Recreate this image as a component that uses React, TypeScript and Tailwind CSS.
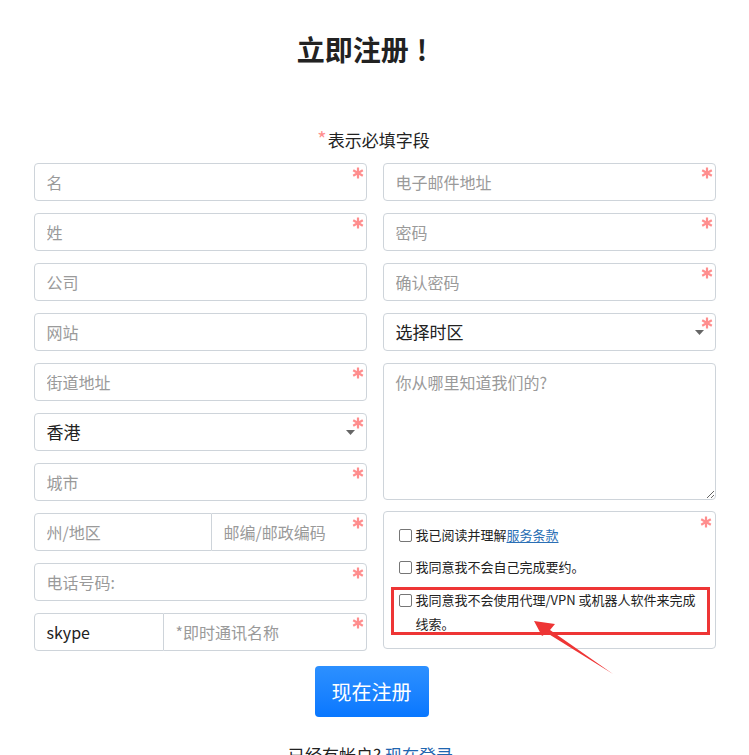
import React from "react";

const FONT = { fontFamily: '"Noto Sans CJK SC", "Noto Sans", sans-serif' };

function Star() {
  return (
    <svg
      className="absolute right-[3px] top-[4px] pointer-events-none"
      width="12"
      height="12"
      viewBox="0 0 12 12"
    >
      <g stroke="#ff8e8e" strokeWidth="2.2" strokeLinecap="butt">
        <line x1="6" y1="0.5" x2="6" y2="11.5" />
        <line x1="1.2" y1="3.2" x2="10.8" y2="8.8" />
        <line x1="1.2" y1="8.8" x2="10.8" y2="3.2" />
      </g>
    </svg>
  );
}

function Caret() {
  return (
    <svg
      className="absolute right-[12px] top-[17px] pointer-events-none"
      width="9"
      height="5"
      viewBox="0 0 9 5"
    >
      <polygon points="0,0 9,0 4.5,5" fill="#666" />
    </svg>
  );
}

const inputCls =
  "w-full h-[38px] rounded-[4px] border border-[#ced4da] bg-white px-3 text-[16px] text-[#333] placeholder:text-[#9a9a9a] outline-none";

function Field({ ph, star = true }: { ph: string; star?: boolean }) {
  return (
    <div className="relative">
      <input className={inputCls} placeholder={ph} style={FONT} />
      {star && <Star />}
    </div>
  );
}

function SelectField({ value }: { value: string }) {
  return (
    <div className="relative">
      <div
        className="w-full h-[38px] rounded-[4px] border border-[#ced4da] bg-white px-3 text-[17px] text-[#222] flex items-center"
        style={FONT}
      >
        {value}
      </div>
      <Caret />
      <Star />
    </div>
  );
}

function Check({ children }: { children: React.ReactNode }) {
  return (
    <label className="flex items-start gap-[4px] text-[13px] leading-6 text-[#222]" style={FONT}>
      <span className="mt-[6px] ml-[15px] w-[13px] h-[13px] shrink-0 rounded-[2px] border border-[#767676] bg-white" />
      <span>{children}</span>
    </label>
  );
}

export default function App() {
  return (
    <div className="w-full min-h-[755px] bg-white" style={FONT}>
      <div className="w-[682px] mx-auto flex flex-col items-center pt-[31px]">
        <h1 className="mr-[25px] text-[28px] leading-[36px] font-bold text-[#222]">
          立即注册<span className="ml-[8px]">!</span>
        </h1>
        <p className="mt-[61px] mr-[2px] text-[17px] leading-6 text-[#222]">
          <span className="text-[#ff8e8e] text-[20px] leading-none mr-[1px]">*</span>表示必填字段
        </p>

        <div className="mt-[11px] w-full grid grid-cols-2 gap-x-[16px]">
          <div className="flex flex-col gap-[12px]">
            <Field ph="名" />
            <Field ph="姓" />
            <Field ph="公司" star={false} />
            <Field ph="网站" star={false} />
            <Field ph="街道地址" />
            <SelectField value="香港" />
            <Field ph="城市" />
            <div className="relative flex h-[38px]">
              <input
                className="w-[178px] h-full rounded-l-[4px] border border-[#ced4da] px-3 text-[16px] placeholder:text-[#9a9a9a] outline-none"
                placeholder="州/地区"
                style={FONT}
              />
              <input
                className="flex-1 min-w-0 h-full rounded-r-[4px] border border-l-0 border-[#ced4da] px-3 text-[16px] placeholder:text-[#9a9a9a] outline-none"
                placeholder="邮编/邮政编码"
                style={FONT}
              />
              <Star />
            </div>
            <Field ph="电话号码:" />
            <div className="relative flex h-[38px]">
              <div className="w-[130px] h-full rounded-l-[4px] border border-[#ced4da] px-3 flex items-center text-[16px] text-[#222]">
                skype
              </div>
              <input
                className="flex-1 min-w-0 h-full rounded-r-[4px] border border-l-0 border-[#ced4da] px-3 text-[16px] placeholder:text-[#9a9a9a] outline-none"
                placeholder="*即时通讯名称"
                style={FONT}
              />
              <Star />
            </div>
          </div>

          <div className="flex flex-col gap-[12px]">
            <Field ph="电子邮件地址" />
            <Field ph="密码" />
            <Field ph="确认密码" />
            <SelectField value="选择时区" />
            <textarea
              className="w-full h-[137px] rounded-[4px] border border-[#ced4da] px-3 py-[6px] text-[16px] leading-6 placeholder:text-[#9a9a9a] outline-none resize-y"
              placeholder="你从哪里知道我们的?"
              style={FONT}
            />
            <div className="relative -mt-[1px] h-[138px] rounded-[4px] border border-[#ced4da] bg-white pt-[11px] flex flex-col gap-[8px]">
              <Star />
              <Check>
                我已阅读并理解
                <a className="text-[#2a6fb5] underline underline-offset-2">服务条款</a>
              </Check>
              <Check>我同意我不会自己完成要约。</Check>
              <div className="mt-[1px]">
                <Check>
                  我同意我不会使用代理/VPN 或机器人软件来完成
                  <br />
                  线索。
                </Check>
              </div>
              <div className="absolute left-[7px] top-[75px] w-[319px] h-[48px] border-[3px] border-[#ee3535] pointer-events-none" />
              <svg
                className="absolute left-[140px] top-[99px] pointer-events-none overflow-visible"
                width="100"
                height="70"
                viewBox="0 0 100 70"
              >
                <polygon
                  points="10,10 31,13 26,19 89,63 23,22 18,25"
                  fill="#ee3535"
                />
              </svg>
            </div>
          </div>
        </div>

        <button
          className="mt-[15px] mr-[6px] w-[114px] h-[51px] rounded-[4px] bg-linear-to-b from-[#2c90ff] to-[#0877ff] text-white text-[20px]"
          style={FONT}
        >
          现在注册
        </button>
        <p className="mt-[26px] mr-[8px] text-[17px] leading-6 text-[#222]">
          已经有帐户? <a className="text-[#1f66b0]">现在登录</a>
        </p>
      </div>
    </div>
  );
}
